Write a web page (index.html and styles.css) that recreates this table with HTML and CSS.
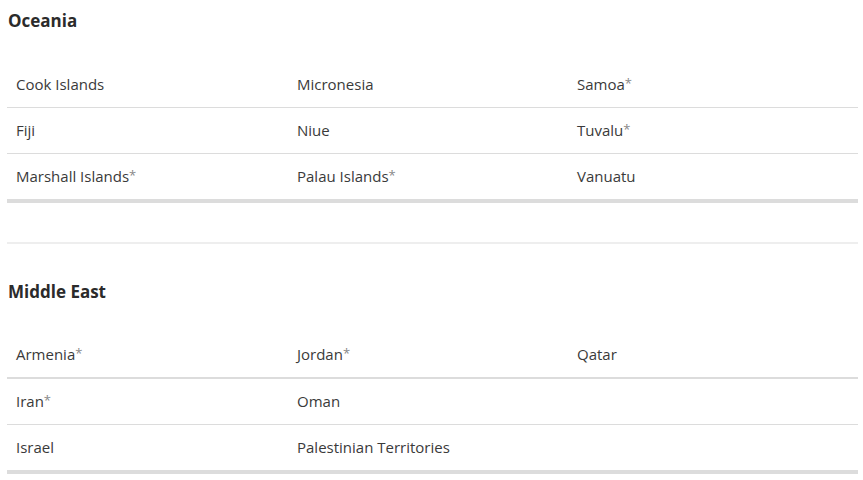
FILE: index.html
```html
<!DOCTYPE html>
<html>
<head>
<meta charset="utf-8">
<link rel="stylesheet" href="styles.css">
</head>
<body>
<div class="page">
  <section class="region">
    <h2 class="region-title">Oceania</h2>
    <div class="grid">
      <div class="cell">Cook Islands</div>
      <div class="cell">Micronesia</div>
      <div class="cell">Samoa<span class="ast">*</span></div>
      <div class="cell">Fiji</div>
      <div class="cell">Niue</div>
      <div class="cell">Tuvalu<span class="ast">*</span></div>
      <div class="cell last">Marshall Islands<span class="ast">*</span></div>
      <div class="cell last">Palau Islands<span class="ast">*</span></div>
      <div class="cell last">Vanuatu</div>
    </div>
  </section>
  <hr class="divider">
  <section class="region">
    <h2 class="region-title">Middle East</h2>
    <div class="grid">
      <div class="cell first-thick">Armenia<span class="ast">*</span></div>
      <div class="cell first-thick">Jordan<span class="ast">*</span></div>
      <div class="cell first-thick">Qatar</div>
      <div class="cell">Iran<span class="ast">*</span></div>
      <div class="cell">Oman</div>
      <div class="cell"></div>
      <div class="cell last">Israel</div>
      <div class="cell last">Palestinian Territories</div>
      <div class="cell last"></div>
    </div>
  </section>
</div>
</body>
</html>
```

FILE: styles.css
```css
html, body {
  margin: 0;
  padding: 0;
  background: #fff;
}
.page {
  width: 851px;
  padding-left: 7px;
  font-family: "Open Sans", "Liberation Sans", sans-serif;
  color: #333;
}
.region-title {
  margin: 11px 0 0 1px;
  font-size: 17px;
  line-height: 20px;
  font-weight: 700;
  color: #2b2b2b;
}
.grid {
  margin-top: 31px;
  display: grid;
  grid-template-columns: 281px 280px 1fr;
}
.cell {
  box-sizing: border-box;
  height: 46px;
  display: flex;
  align-items: center;
  padding: 0 0 2px 9px;
  font-size: 15px;
  color: #3a3a3a;
  border-bottom: 1px solid #dcdcdc;
}
.cell.first-thick {
  border-bottom: 2px solid #dcdcdc;
}
.cell.last {
  height: 49px;
  border-bottom: 4px solid #dcdcdc;
}
.ast {
  color: #888;
  font-size: 13px;
  position: relative;
  top: -1px;
}
.divider {
  margin: 39px 0 0 0;
  border: 0;
  height: 2px;
  background: #eeeeee;
}
.region + .divider + .region .region-title {
  margin-top: 38px;
}
```
